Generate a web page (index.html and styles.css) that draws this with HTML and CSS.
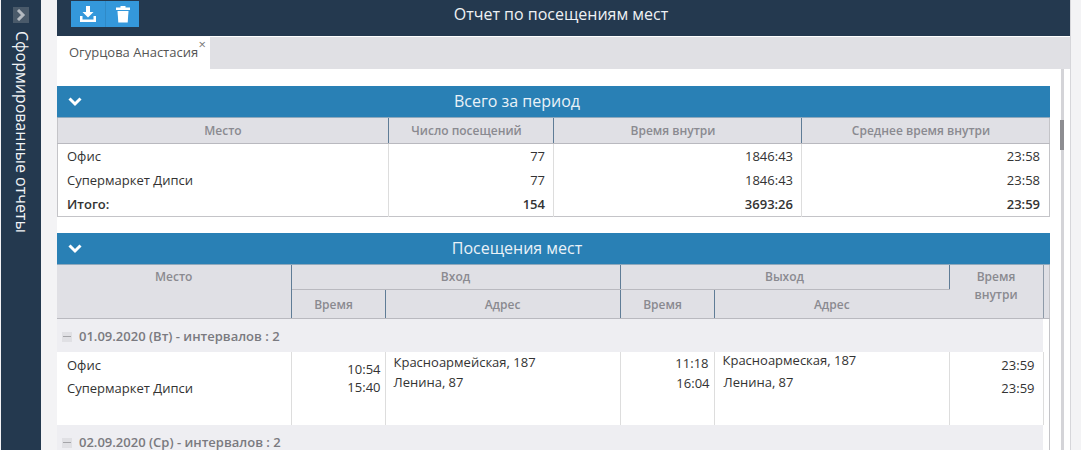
FILE: index.html
```html
<!DOCTYPE html>
<html lang="en">
  <head>
    <title>Отчет по посещениям мест</title>
    <meta charset="UTF-8" />
    <link rel="stylesheet" href="styles.css">
  </head>
  <body>
    <div class="sidebar">
      <div class="sidebar__toggle">
        <svg width="10" height="12" viewBox="0 0 10 12"><path d="M2 1l5 5-5 5" fill="none" stroke="#b4bac1" stroke-width="3"/></svg>
      </div>
      <div class="sidebar__title">Сформированные отчеты</div>
    </div>

    <div class="report">
      <div class="report__topbar">
        <div class="report__actions">
          <button class="report__button">
            <svg width="18" height="18" viewBox="0 0 18 18"><path d="M7 1h4v6h3.500L9 12.500 3.500 7H7z" fill="#fff"/><path d="M1 11h2.500v3.500h11V11H17v6H1z" fill="#fff"/></svg>
          </button>
          <button class="report__button">
            <svg width="16" height="18" viewBox="0 0 16 18"><path d="M1 2.500h4.500V1h5v1.500H15V5H1z" fill="#fff"/><path d="M2.500 6h11l-.8 11.500H3.300z" fill="#fff"/></svg>
          </button>
        </div>
        <div class="report__title">Отчет по посещениям мест</div>
      </div>

      <div class="report__tabs">
        <div class="report__tab">Огурцова Анастасия<span class="report__tab__close">×</span></div>
      </div>

      <div class="report__body">
        <div class="report__content">

          <div class="section">
            <div class="section__head">
              <svg class="section__chevron" width="14" height="10" viewBox="0 0 14 10"><path d="M1.500 1.500L7 7l5.500-5.500" fill="none" stroke="#fff" stroke-width="3"/></svg>
              <span class="section__title">Всего за период</span>
            </div>
            <table class="grid grid--total">
              <colgroup>
                <col class="c-331"><col class="c-165"><col class="c-248"><col>
              </colgroup>
              <thead>
                <tr>
                  <th>Место</th>
                  <th class="off">Число посещений</th>
                  <th class="off">Время внутри</th>
                  <th class="off">Среднее время внутри</th>
                </tr>
              </thead>
              <tbody>
                <tr>
                  <td>Офис</td>
                  <td class="num">77</td>
                  <td class="num">1846:43</td>
                  <td class="num last">23:58</td>
                </tr>
                <tr>
                  <td>Супермаркет Дипси</td>
                  <td class="num">77</td>
                  <td class="num">1846:43</td>
                  <td class="num last">23:58</td>
                </tr>
                <tr class="total">
                  <td>Итого:</td>
                  <td class="num">154</td>
                  <td class="num">3693:26</td>
                  <td class="num last">23:59</td>
                </tr>
              </tbody>
            </table>
          </div>

          <div class="section">
            <div class="section__head">
              <svg class="section__chevron" width="14" height="10" viewBox="0 0 14 10"><path d="M1.500 1.500L7 7l5.500-5.500" fill="none" stroke="#fff" stroke-width="3"/></svg>
              <span class="section__title">Посещения мест</span>
            </div>
            <table class="grid grid--visits">
              <colgroup>
                <col class="c-234"><col class="c-94"><col class="c-235"><col class="c-94"><col class="c-235"><col class="c-94"><col>
              </colgroup>
              <thead>
                <tr>
                  <th rowspan="2" class="top">Место</th>
                  <th colspan="2">Вход</th>
                  <th colspan="2">Выход</th>
                  <th rowspan="2" class="top wrap">Время внутри</th>
                  <th rowspan="2" class="edge"></th>
                </tr>
                <tr class="sub">
                  <th class="off">Время</th>
                  <th>Адрес</th>
                  <th class="off">Время</th>
                  <th>Адрес</th>
                </tr>
              </thead>
              <tbody>
                <tr class="group">
                  <td colspan="6"><span class="group__minus"></span>01.09.2020 (Вт) - интервалов : 2</td>
                  <td class="edge"></td>
                </tr>
                <tr class="visit">
                  <td class="place">
                    <div class="stack stack--place"><span>Офис</span><span>Супермаркет Дипси</span></div>
                  </td>
                  <td class="num time-in">
                    <div class="stack stack--in"><span>10:54</span><span>15:40</span></div>
                  </td>
                  <td class="addr">
                    <div class="stack stack--addr"><span>Красноармейская, 187</span><span>Ленина, 87</span></div>
                  </td>
                  <td class="num time-out">
                    <div class="stack stack--out"><span>11:18</span><span class="nudge">16:04</span></div>
                  </td>
                  <td class="addr">
                    <div class="stack stack--addr-out"><span>Красноармеская, 187</span><span class="indent">Ленина, 87</span></div>
                  </td>
                  <td class="num">
                    <div class="stack stack--place"><span>23:59</span><span>23:59</span></div>
                  </td>
                  <td class="edge"></td>
                </tr>
                <tr class="group">
                  <td colspan="6"><span class="group__minus"></span>02.09.2020 (Ср) - интервалов : 2</td>
                  <td class="edge"></td>
                </tr>
              </tbody>
            </table>
          </div>

        </div>
        <div class="scrollbar"><div class="scrollbar__thumb"></div></div>
      </div>
    </div>
  </body>
</html>
```

FILE: styles.css
```css
html, body {
  height: 450px;
  margin: 0;
  overflow: hidden;
}

body {
  display: flex;
  font-family: 'Open Sans', Arial, sans-serif;
  font-size: 13px;
  color: #333333;
  background: #f3f3f5;
}

.sidebar {
  width: 40px;
  margin-left: 1px;
  background: #24394f;
  display: flex;
  flex-direction: column;
  align-items: center;
  flex-shrink: 0;
}

.sidebar__toggle {
  display: flex;
  align-items: center;
  justify-content: center;
  width: 16px;
  height: 16px;
  margin-top: 7px;
  background: #4a5a6a;
}

.sidebar__title {
  margin-top: 8px;
  margin-left: 2px;
  writing-mode: vertical-rl;
  font-size: 16px;
  line-height: 20px;
  color: #f2f4f6;
}

.report {
  width: 1013px;
  margin-left: 16px;
  background: #ffffff;
  border-right: 1px solid #d6d6da;
  flex-shrink: 0;
}

.report__topbar {
  position: relative;
  height: 36px;
  background: #24394f;
  display: flex;
  justify-content: center;
}

.report__actions {
  position: absolute;
  left: 14px;
  top: 1px;
  display: flex;
}

.report__button {
  display: flex;
  align-items: center;
  justify-content: center;
  width: 34px;
  height: 26px;
  padding: 0;
  border: none;
  background: #3498db;
}

.report__button + .report__button {
  border-left: 1px solid #2f8ac7;
}

.report__title {
  padding-right: 5px;
  font-size: 16px;
  line-height: 29px;
  color: #eef1f4;
}

.report__tabs {
  height: 32px;
  margin-top: 1px;
  background: #e0e0e4;
}

.report__tab {
  position: relative;
  width: 153px;
  height: 32px;
  padding-left: 12px;
  box-sizing: border-box;
  background: #ffffff;
  font-size: 13px;
  line-height: 31px;
  color: #555555;
}

.report__tab__close {
  position: absolute;
  right: 4px;
  top: 0;
  font-size: 13px;
  line-height: 14px;
  color: #777777;
}

.report__body {
  display: flex;
  height: 381px;
  overflow: hidden;
}

.report__content {
  width: 993px;
  margin-right: 11px;
  padding-top: 17px;
  flex-shrink: 0;
}

.scrollbar {
  width: 3px;
  background: #d4d4d8;
}

.scrollbar__thumb {
  width: 4px;
  height: 30px;
  margin-top: 51px;
  margin-left: -1px;
  background: #8d8d91;
}

.section {
  margin-bottom: 16px;
}

.section__head {
  position: relative;
  height: 32px;
  padding-right: 73px;
  background: #2980b5;
  border-bottom: 1px solid #8fa9bd;
  box-sizing: border-box;
  text-align: center;
}

.section__chevron {
  position: absolute;
  left: 11px;
  top: 11px;
}

.section__title {
  font-size: 16px;
  line-height: 31px;
  color: #eaf2f8;
}

.grid {
  width: 100%;
  table-layout: fixed;
  border-collapse: collapse;
}

.grid th {
  height: 25px;
  padding: 0;
  box-sizing: border-box;
  background: #e0e0e5;
  border-right: 1px solid #5f7c96;
  border-bottom: 1px solid #b9b9bf;
  font-size: 12px;
  font-weight: 600;
  color: #8a8a90;
  text-align: center;
}

.grid th:last-child {
  border-right: none;
}

.grid th.off {
  padding-right: 9px;
}

.grid td {
  padding: 0 8px 0 9px;
  border-right: 1px solid #dddddd;
  color: #333333;
}

.grid td:last-child {
  border-right: none;
}

.grid .num {
  text-align: right;
}

.grid .last {
  padding-right: 9px;
}

.c-331 { width: 331px; }
.c-165 { width: 165px; }
.c-248 { width: 248px; }
.c-234 { width: 234px; }
.c-235 { width: 235px; }
.c-94 { width: 94px; }

.grid--total {
  border: 1px solid #c4c4c8;
  border-top: none;
}

.grid--total td {
  height: 24px;
}

.total td {
  font-weight: 600;
}

.grid--visits {
  border-right: 1px solid #c4c4c8;
}

.grid--visits .sub th {
  height: 29px;
}

.grid--visits th.top {
  vertical-align: top;
  padding-top: 3px;
  line-height: 18px;
}

.grid--visits th.wrap {
  padding: 3px 20px 0;
  border-right: 1px solid #8e9aa8;
}

.grid--visits td.edge {
  padding: 0;
  background: #ffffff;
}

.group td {
  height: 33px;
  padding: 0 5px;
  background: #eeeef2;
  border-right: none;
  font-weight: 600;
  color: #7a7a80;
}

.group__minus {
  display: inline-block;
  width: 10px;
  height: 10px;
  margin-right: 7px;
  vertical-align: -1px;
  background: linear-gradient(#a4a4a8, #a4a4a8) center / 8px 1px no-repeat #e0e0e4;
}

.visit td {
  height: 73px;
  vertical-align: top;
}

.grid .place {
  padding-left: 10px;
}

.grid .time-in {
  padding-right: 4px;
}

.grid .time-out {
  padding-right: 5px;
}

.grid .addr {
  padding-left: 8px;
}

.stack {
  display: flex;
  flex-direction: column;
  line-height: 16px;
}

.stack--place {
  padding-top: 5px;
  gap: 7px;
}

.stack--in {
  padding-top: 9px;
  gap: 2px;
}

.stack--addr {
  padding-top: 2px;
  gap: 4px;
}

.stack--out {
  padding-top: 3px;
  gap: 4px;
}

.stack--addr-out {
  gap: 6px;
}

.nudge {
  margin-right: -1px;
}

.indent {
  margin-left: 1px;
}
```
